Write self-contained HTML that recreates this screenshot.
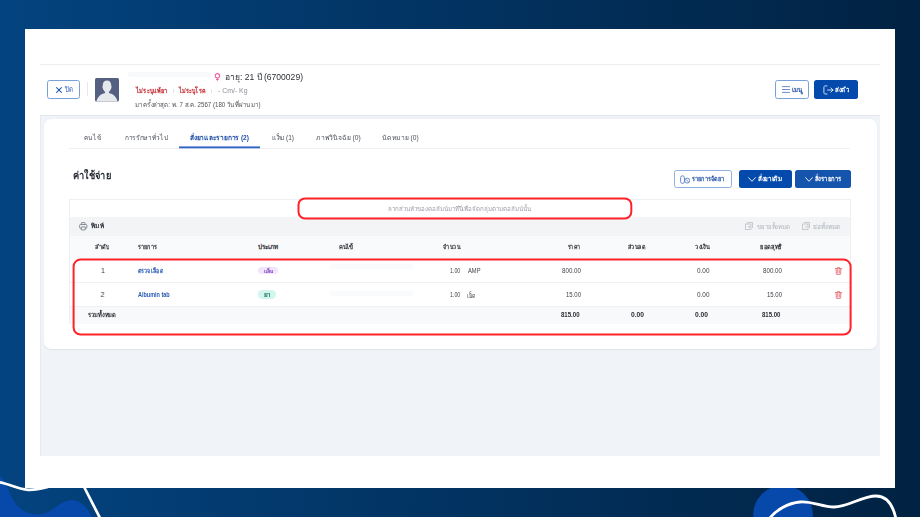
<!DOCTYPE html>
<html lang="th">
<head>
<meta charset="utf-8">
<title>ค่าใช้จ่าย</title>
<style>
*{box-sizing:border-box;margin:0;padding:0}
html,body{width:920px;height:517px;overflow:hidden}
body{position:relative;font-family:"Liberation Sans",sans-serif;background:linear-gradient(90deg,#03437f 0%,#012242 100%);color:#333}
.a{position:absolute;white-space:nowrap}
.t{position:absolute;white-space:nowrap;line-height:1;transform-origin:0 50%}
.deco{position:absolute;left:0;top:0}
.box{position:absolute}
.btn-o{position:absolute;border:1px solid #6f97d8;border-radius:2.5px;background:#fff}
.btn-f{position:absolute;background:#034aac;border-radius:2.5px}
.redbox{position:absolute;border:2px solid #ff2026;border-radius:7px}
.tab{font-size:7px;color:#4a4f58}
.th{font-size:6.3px;font-weight:bold;color:#2b2d33}
.td{font-size:7px;color:#404248}
</style>
</head>
<body>
<!-- background decorations -->
<svg class="deco" viewBox="0 0 920 517" width="920" height="517">
  <path d="M0 476 C6 482 8 490 12 498 C18 510 30 516 42 514 C52 512 60 502 70 500 C80 499 88 508 92 517 L0 517 Z" fill="#0649ab"/>
  <circle cx="783" cy="515" r="29.8" fill="#0649ab"/>
</svg>

<!-- main white card -->
<div class="box" style="left:25px;top:29px;width:870px;height:459px;background:#fff"></div>
<div class="box" style="left:40px;top:64px;width:840px;height:1px;background:#eceef2"></div>

<!-- close button -->
<div class="btn-o" style="left:47px;top:80px;width:33px;height:19px;border-color:#7aa0dc"></div>
<svg class="a" style="left:55.5px;top:86.5px" width="6" height="6" viewBox="0 0 6 6"><path d="M0.6 0.6L5.4 5.4M5.4 0.6L0.6 5.4" stroke="#2358b5" stroke-width="1.05" stroke-linecap="round" fill="none"/></svg>
<div class="t" style="left:65px;top:85.5px;font-size:7.5px;color:#2358b5;--w:8;transform:scaleX(0.8)">ปิด</div>
<div class="box" style="left:87px;top:82px;width:1px;height:14px;background:#e6e8ec"></div>
<!-- avatar -->
<svg class="a" style="left:95px;top:77.5px" width="24" height="24" viewBox="0 0 24 24">
  <rect width="24" height="23.6" rx="1.5" fill="#545f82"/>
  <path d="M12 2.6C14.6 2.6 16.2 4.4 16.2 7.2L16.6 9.1C16.3 11 15.4 12.6 14.1 13.8L13.9 15C18.2 15.8 21.4 18.6 22.6 23.6H1.4C2.6 18.6 5.8 15.8 10.1 15L9.9 13.8C8.6 12.6 7.7 11 7.4 9.1L7.8 7.2C7.8 4.4 9.4 2.6 12 2.6Z" fill="#e6e9eb"/>
</svg>
<!-- patient info -->
<div class="box" style="left:128px;top:72px;width:82.5px;height:5px;background:#f8f9fb;border-radius:2px;filter:blur(0.6px)"></div>
<svg class="a" style="left:214px;top:73px" width="7" height="8" viewBox="0 0 7 8"><circle cx="3.4" cy="2.8" r="2.2" stroke="#f25aa3" stroke-width="1.05" fill="none"/><path d="M3.4 5V7.7M2.1 6.5H4.7" stroke="#f25aa3" stroke-width="1.05"/></svg>
<div class="t" style="left:224.5px;top:73px;font-size:8.6px;color:#2d2f36;--w:78;transform:scaleX(0.9962)">อายุ: 21 ปี (6700029)</div>
<div class="t" style="left:135.5px;top:87px;font-size:7px;color:#c0262c;font-weight:bold;--w:31.5;transform:scaleX(0.8077)">ไม่ระบุแพ้ยา</div>
<div class="box" style="left:173px;top:89px;width:1px;height:4px;background:#e2e4e8"></div>
<div class="t" style="left:179px;top:87px;font-size:7px;color:#c0262c;font-weight:bold;--w:26.6;transform:scaleX(0.7824)">ไม่ระบุโรค</div>
<div class="box" style="left:211px;top:89px;width:1px;height:4px;background:#e2e4e8"></div>
<div class="t" style="left:218px;top:87px;font-size:7px;color:#8a8d94;--w:29.5;transform:scaleX(0.9849)">- Cm/- Kg</div>
<div class="t" style="left:135px;top:100.5px;font-size:7px;color:#4e5158;--w:125.5;transform:scaleX(0.876)">มาครั้งล่าสุด: พ. 7 ส.ค. 2567 (180 วันที่ผ่านมา)</div>
<!-- right header buttons -->
<div class="btn-o" style="left:775px;top:80px;width:34px;height:18.5px;border-color:#7aa0dc"></div>
<svg class="a" style="left:782px;top:85.5px" width="8" height="7" viewBox="0 0 8 7"><path d="M0 0.6H8M0 3.5H8M0 6.4H8" stroke="#5a84cc" stroke-width="0.9"/></svg>
<div class="t" style="left:792px;top:85.5px;font-size:7px;color:#1f4fa3;--w:10.5;transform:scaleX(0.875)"><b>เมนู</b></div>
<div class="btn-f" style="left:814px;top:80px;width:44px;height:18.5px"></div>
<svg class="a" style="left:822.5px;top:84.5px" width="11" height="10" viewBox="0 0 11 10"><path d="M4 0.9H2.3C1.4 0.9 0.9 1.5 0.9 2.4V7.5C0.9 8.4 1.4 9 2.3 9H4M4.6 5H10M7.9 2.9L10 5L7.9 7.1" stroke="#e8eefa" stroke-width="0.9" stroke-linecap="round" stroke-linejoin="round" fill="none"/></svg>
<div class="t" style="left:835px;top:85.5px;font-size:7px;color:#fff;font-weight:bold;--w:14;transform:scaleX(0.875)">ส่งตัว</div>

<!-- gray content area -->
<div class="box" style="left:40px;top:115px;width:840px;height:340.5px;background:#f0f3f7;border-top:1px solid #e3e7ec;border-left:1.5px solid #e7ebf0"></div>
<div class="box" style="left:44px;top:118.5px;width:832.5px;height:230.5px;background:#fff;border-radius:7px;box-shadow:0 0.5px 1.5px rgba(30,40,60,0.08)"></div>

<!-- tabs -->
<div class="box" style="left:69px;top:147.5px;width:781px;height:1px;background:#eef0f3"></div>
<svg class="deco" width="920" height="517" viewBox="0 0 920 517"><rect x="179" y="146.4" width="81" height="1.9" fill="#3264c4"/></svg>
<div class="t tab" style="left:83.5px;top:134px;--w:17;transform:scaleX(0.8947)">คนไข้</div>
<div class="t tab" style="left:125.4px;top:134px;--w:42.5;transform:scaleX(0.9239)">การรักษาทั่วไป</div>
<div class="t tab" style="left:190px;top:134px;color:#1f4fa8;font-weight:bold;--w:59;transform:scaleX(0.944)">สั่งยาและรายการ (2)</div>
<div class="t tab" style="left:271.8px;top:134px;--w:22;transform:scaleX(0.9362)">แล็บ (1)</div>
<div class="t tab" style="left:316px;top:134px;--w:44.7;transform:scaleX(0.9613)">ภาพวินิจฉัย (0)</div>
<div class="t tab" style="left:382px;top:134px;--w:36.6;transform:scaleX(0.9506)">นัดหมาย (0)</div>

<!-- title + action buttons -->
<div class="t" style="left:72.7px;top:169.5px;font-size:10.5px;font-weight:bold;color:#262a33;--w:38;transform:scaleX(0.8837)">ค่าใช้จ่าย</div>
<div class="btn-o" style="left:674px;top:170px;width:58px;height:18px;border-color:#8fb0e0"></div>
<svg class="a" style="left:680px;top:174.5px" width="10" height="9" viewBox="0 0 10 9"><rect x="0.6" y="0.8" width="3.8" height="7.6" rx="1.9" stroke="#4a78c8" stroke-width="0.85" fill="none"/><circle cx="7.2" cy="5.6" r="2.5" stroke="#4a78c8" stroke-width="0.85" fill="none"/><path d="M5.9 4.2L8.5 7" stroke="#4a78c8" stroke-width="0.8"/></svg>
<div class="t" style="left:692px;top:175.5px;font-size:6.5px;color:#1f4fa8;font-weight:bold;--w:32.5;transform:scaleX(0.8553)">รายการจัดยา</div>
<div class="btn-f" style="left:739px;top:170px;width:52.5px;height:18px"></div>
<svg class="a" style="left:748.3px;top:176.8px" width="8" height="5" viewBox="0 0 8 5"><path d="M0.4 0.4L4 4.3L7.6 0.4" stroke="#fff" stroke-width="0.9" fill="none"/></svg>
<div class="t" style="left:758.2px;top:175.3px;font-size:7px;color:#fff;font-weight:bold;--w:24.5;transform:scaleX(0.9074)">สั่งยาเดิม</div>
<div class="btn-f" style="left:795px;top:170px;width:55.5px;height:18px;background:#1554ac"></div>
<svg class="a" style="left:804.8px;top:176.8px" width="8" height="5" viewBox="0 0 8 5"><path d="M0.4 0.4L4 4.3L7.6 0.4" stroke="#fff" stroke-width="0.9" fill="none"/></svg>
<div class="t" style="left:815.4px;top:175.3px;font-size:7px;color:#fff;font-weight:bold;--w:26.3;transform:scaleX(0.8484)">สั่งรายการ</div>

<!-- table -->
<div class="box" style="left:69px;top:199px;width:781.5px;height:124.5px;border:1px solid #eef0f3;background:#fff"></div>
<div class="t" style="left:388px;top:205.8px;font-size:6.2px;color:#9a9ea6;--w:143;transform:scaleX(0.9931)">ลากส่วนหัวของคอลัมน์มาที่นี่เพื่อจัดกลุ่มตามคอลัมน์นั้น</div>
<div class="box" style="left:70px;top:217px;width:779.5px;height:18.5px;background:#f3f4f6"></div>
<svg class="a" style="left:79px;top:222px" width="8.5" height="8.5" viewBox="0 0 8.5 8.5"><path d="M2.4 2.5V1.1C2.4 0.8 2.6 0.6 2.9 0.6H5.6C5.9 0.6 6.1 0.8 6.1 1.1V2.5M2.3 6.4H1.5C0.9 6.4 0.6 6 0.6 5.5V3.4C0.6 2.9 0.9 2.5 1.5 2.5H7C7.6 2.5 7.9 2.9 7.9 3.4V5.5C7.9 6 7.6 6.4 7 6.4H6.2M2.3 4.9H6.2V7.9H2.3Z" stroke="#777d87" stroke-width="0.85" stroke-linejoin="round" fill="none"/></svg>
<div class="t th" style="left:91px;top:223.2px;color:#3b3f47;--w:13;transform:scaleX(1.0833)">พิมพ์</div>
<svg class="a" style="left:745px;top:222.3px" width="8" height="8" viewBox="0 0 8 8"><rect x="0.5" y="2" width="5.5" height="5.5" stroke="#b4b8bf" stroke-width="0.7" fill="none"/><path d="M2 0.5H7.5V6M3.2 4.8H5.2M4.2 3.8V5.8" stroke="#b4b8bf" stroke-width="0.7" fill="none"/></svg>
<div class="t" style="left:757px;top:223.5px;font-size:6.2px;color:#aeb2b9;--w:33;transform:scaleX(0.9706)">ขยายทั้งหมด</div>
<svg class="a" style="left:802px;top:222.3px" width="8" height="8" viewBox="0 0 8 8"><rect x="0.5" y="2" width="5.5" height="5.5" stroke="#b4b8bf" stroke-width="0.7" fill="none"/><path d="M2 0.5H7.5V6M3.2 4.8H5.2" stroke="#b4b8bf" stroke-width="0.7" fill="none"/></svg>
<div class="t" style="left:813px;top:223.5px;font-size:6.2px;color:#aeb2b9;--w:27;transform:scaleX(1)">ย่อทั้งหมด</div>

<!-- header row -->
<div class="box" style="left:70px;top:235.5px;width:780px;height:23px;background:#f9fafb"></div>
<div class="t th" style="left:95px;top:244px;--w:14;transform:scaleX(0.875)">ลำดับ</div>
<div class="t th" style="left:137.8px;top:244px;--w:19;transform:scaleX(0.8636)">รายการ</div>
<div class="t th" style="left:258.4px;top:244px;--w:20;transform:scaleX(1)">ประเภท</div>
<div class="t th" style="left:339px;top:244px;--w:14;transform:scaleX(0.9333)">คนไข้</div>
<div class="t th" style="left:443px;top:244px;--w:17;transform:scaleX(0.85)">จำนวน</div>
<div class="t th" style="left:568px;top:244px;--w:12.5;transform:scaleX(0.8333)">ราคา</div>
<div class="t th" style="left:627.6px;top:244px;--w:17.4;transform:scaleX(0.87)">ส่วนลด</div>
<div class="t th" style="left:695px;top:244px;--w:14.5;transform:scaleX(0.9063)">วงเงิน</div>
<div class="t th" style="left:760px;top:244px;--w:22;transform:scaleX(0.9167)">ยอดสุทธิ</div>

<!-- rows -->
<div class="box" style="left:70px;top:282px;width:780px;height:1px;background:#f0f1f3"></div>
<div class="box" style="left:70px;top:306px;width:780px;height:17.5px;background:#f8f9fb;border-top:1px solid #eff0f2"></div>

<div class="t td" style="left:101px;top:266.9px">1</div>
<div class="t" style="left:138px;top:267.5px;font-size:6.3px;color:#2a5ab3;font-weight:bold;--w:25;transform:scaleX(0.8621)">ตรวจเลือด</div>
<div class="box" style="left:258.3px;top:266.8px;width:20px;height:7.4px;border-radius:3.7px;background:#f1e4fc"></div>
<div class="t" style="left:264px;top:268.5px;font-size:5px;color:#7a3bbd;font-weight:bold;--w:9.2;transform:scaleX(1.0222)">แล็บ</div>
<div class="box" style="left:330px;top:264px;width:83px;height:5px;background:#fafbfc;border-radius:2px;filter:blur(0.6px)"></div>
<div class="t td" style="left:449.7px;top:266.9px;--w:10.3;transform:scaleX(0.756)">1.00</div>
<div class="t td" style="left:467.5px;top:266.9px;--w:12.5;transform:scaleX(0.8239)">AMP</div>
<div class="t td" style="left:562px;top:266.9px;--w:19;transform:scaleX(0.8869)">800.00</div>
<div class="t td" style="left:697px;top:266.9px;--w:12.5;transform:scaleX(0.9174)">0.00</div>
<div class="t td" style="left:763px;top:266.9px;--w:19;transform:scaleX(0.8869)">800.00</div>
<svg class="a" style="left:835.3px;top:266.8px" width="7" height="8" viewBox="0 0 7 8"><path d="M0.4 1.7H6.6M2.4 1.7V0.9C2.4 0.6 2.6 0.4 2.9 0.4H4.1C4.4 0.4 4.6 0.6 4.6 0.9V1.7M1.1 1.7L1.4 6.9C1.4 7.3 1.7 7.6 2.1 7.6H4.9C5.3 7.6 5.6 7.3 5.6 6.9L5.9 1.7M2.7 3.1V6.2M4.3 3.1V6.2" stroke="#e0575d" stroke-width="0.75" stroke-linecap="round" fill="none"/></svg>

<div class="t td" style="left:100.5px;top:291.2px">2</div>
<div class="t" style="left:138px;top:291.6px;font-size:6.3px;color:#2a5ab3;font-weight:bold;--w:31.7;transform:scaleX(0.8711)">Albumin tab</div>
<div class="box" style="left:258.3px;top:290.3px;width:17.4px;height:8.4px;border-radius:4.2px;background:#d0f6ed"></div>
<div class="t" style="left:264px;top:292.6px;font-size:5.5px;color:#1d6b5c;font-weight:bold;--w:6.8;transform:scaleX(1.1333)">ยา</div>
<div class="box" style="left:330px;top:290.6px;width:83px;height:5px;background:#fafbfc;border-radius:2px;filter:blur(0.6px)"></div>
<div class="t td" style="left:449.7px;top:291.2px;--w:10.3;transform:scaleX(0.756)">1.00</div>
<div class="t td" style="left:467px;top:291.8px;--w:9;transform:scaleX(0.75)">เม็ด</div>
<div class="t td" style="left:566px;top:291.2px;--w:15;transform:scaleX(0.8556)">15.00</div>
<div class="t td" style="left:697px;top:291.2px;--w:12.5;transform:scaleX(0.9174)">0.00</div>
<div class="t td" style="left:767px;top:291.2px;--w:15;transform:scaleX(0.8556)">15.00</div>
<svg class="a" style="left:835.3px;top:290.9px" width="7" height="8" viewBox="0 0 7 8"><path d="M0.4 1.7H6.6M2.4 1.7V0.9C2.4 0.6 2.6 0.4 2.9 0.4H4.1C4.4 0.4 4.6 0.6 4.6 0.9V1.7M1.1 1.7L1.4 6.9C1.4 7.3 1.7 7.6 2.1 7.6H4.9C5.3 7.6 5.6 7.3 5.6 6.9L5.9 1.7M2.7 3.1V6.2M4.3 3.1V6.2" stroke="#e0575d" stroke-width="0.75" stroke-linecap="round" fill="none"/></svg>

<div class="t th" style="left:88.2px;top:312px;--w:27.6;transform:scaleX(0.92)">รวมทั้งหมด</div>
<div class="t th" style="left:561px;top:311.7px;--w:18.5;transform:scaleX(0.9603)">815.00</div>
<div class="t th" style="left:631px;top:311.7px;--w:13;transform:scaleX(1.0599)">0.00</div>
<div class="t th" style="left:695px;top:311.7px;--w:13;transform:scaleX(1.0599)">0.00</div>
<div class="t th" style="left:762px;top:311.7px;--w:18.4;transform:scaleX(0.9551)">815.00</div>

<!-- red highlight boxes -->
<svg class="deco" width="920" height="517" viewBox="0 0 920 517">
  <rect x="298.5" y="198.4" width="332.8" height="20" rx="6.5" fill="none" stroke="#ff2228" stroke-width="2"/>
  <rect x="73.6" y="259.6" width="777" height="74.9" rx="7" fill="none" stroke="#ff2228" stroke-width="2"/>
</svg>


<!-- white decorative lines -->
<svg class="deco" viewBox="0 0 920 517" width="920" height="517">
  <path d="M-1 482.3 C10 484 18 489.5 28 489.8 C36 490 42 488.5 48 487" stroke="#fff" stroke-width="2.7" fill="none"/>
  <path d="M83.6 486 L100 518" stroke="#fff" stroke-width="2.7" fill="none"/>
  <path d="M769 519 C776 510 788 503 800 502 C812 501 822 507 834 507 C848 507 862 496 876 496 C887 496 893 505 896 519" stroke="#fff" stroke-width="2.8" fill="none"/>
</svg>
<script>
(function(){
  function fit(){
    var els = document.querySelectorAll('.t');
    for (var i=0;i<els.length;i++){
      var el = els[i];
      var w = parseFloat(el.style.getPropertyValue('--w'));
      if (!w) continue;
      el.style.transform = 'none';
      var r = el.getBoundingClientRect().width;
      if (r > 0) el.style.transform = 'scaleX(' + (w / r).toFixed(4) + ')';
    }
  }
  fit();
  if (document.fonts && document.fonts.ready) document.fonts.ready.then(fit);
  window.addEventListener('load', fit);
})();
</script>
</body>
</html>
